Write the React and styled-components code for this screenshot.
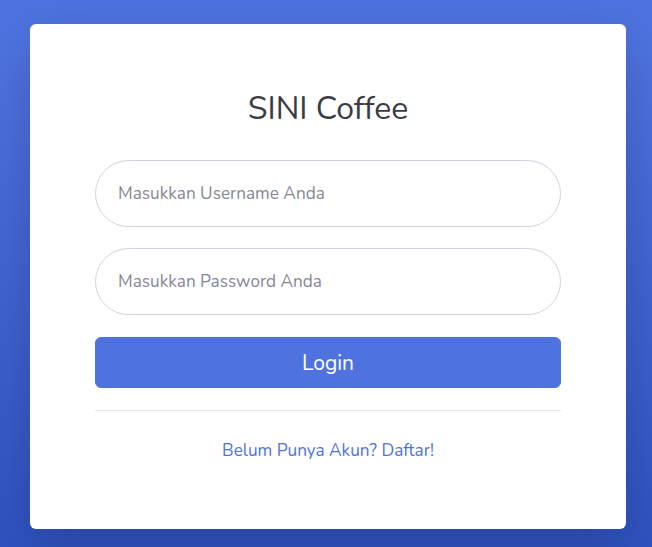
import React from "react";
import styled, { createGlobalStyle } from "styled-components";

const Global = createGlobalStyle`
  html, body { margin: 0; padding: 0; height: 100%; }
  body {
    font-family: "Nunito", "Open Sans", sans-serif;
    background: linear-gradient(180deg, #4e73df 10%, #2f52c0 100%);
    background-attachment: fixed;
  }
  #root { min-height: 100%; }
  input::placeholder { color: #858796; opacity: 1; }
`;

const Page = styled.div`
  min-height: 547px;
  box-sizing: border-box;
  padding: 24px 26px 18px 30px;
  display: flex;
  flex-direction: column;
`;

const Card = styled.div`
  background: #fff;
  border-radius: 6px;
  box-shadow: 0 1rem 3rem rgba(0, 0, 0, 0.175);
  padding: 66px 65px 0;
  height: 505px;
  box-sizing: border-box;
  display: flex;
  flex-direction: column;
`;

const Title = styled.h1`
  margin: 0 0 33px;
  text-align: center;
  font-weight: 400;
  font-size: 32px;
  line-height: 37px;
  color: #3a3b45;
`;

const Form = styled.form`
  display: flex;
  flex-direction: column;
  gap: 21px;
`;

const Input = styled.input`
  box-sizing: border-box;
  width: 100%;
  height: 67px;
  border: 1px solid #d1d3e2;
  border-radius: 10rem;
  padding: 0 22px;
  font-family: inherit;
  font-size: 17.2px;
  color: #6e707e;
  outline: none;
  background: #fff;
`;

const Button = styled.button`
  height: 51px;
  margin-top: 1px;
  border: 1px solid #4e73df;
  border-radius: 6px;
  background: #4e73df;
  color: #fff;
  font-family: inherit;
  font-size: 21px;
  cursor: pointer;
`;

const Divider = styled.hr`
  border: 0;
  border-top: 1px solid #e3e6f0;
  margin: 22px 0 0;
`;

const LinkRow = styled.div`
  text-align: center;
  margin-top: 28px;
`;

const Link = styled.a`
  color: #4e73df;
  font-size: 17.2px;
  text-decoration: none;
`;

export default function App() {
  return (
    <>
      <Global />
      <Page>
        <Card>
          <Title>SINI Coffee</Title>
          <Form onSubmit={(e) => e.preventDefault()}>
            <Input type="text" placeholder="Masukkan Username Anda" />
            <Input type="password" placeholder="Masukkan Password Anda" />
            <Button type="submit">Login</Button>
          </Form>
          <Divider />
          <LinkRow>
            <Link href="#">Belum Punya Akun? Daftar!</Link>
          </LinkRow>
        </Card>
      </Page>
    </>
  );
}
